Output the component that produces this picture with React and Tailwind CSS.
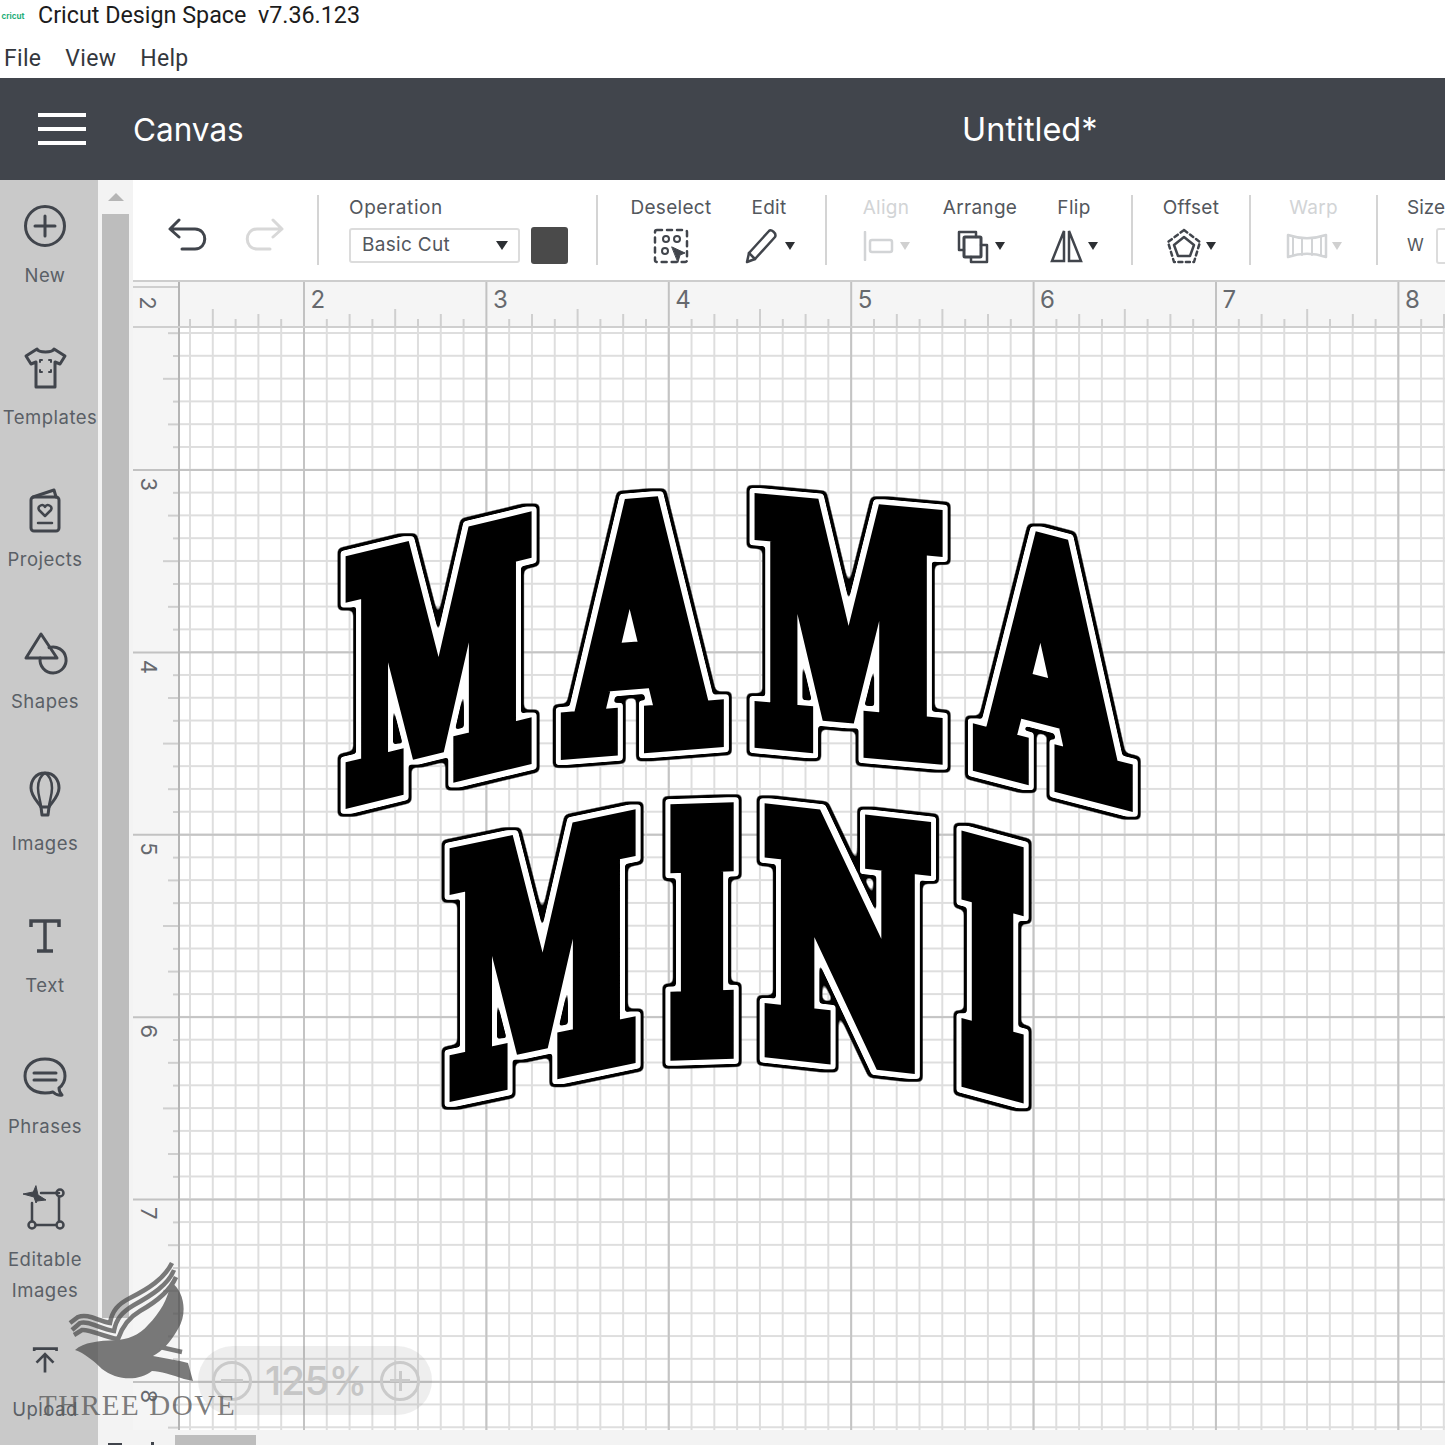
import { Fragment } from "react";

const ink = "#41454c";

const Ico = ({ children, w = 48, h = 48, className = "" }) => (
  <svg width={w} height={h} viewBox={`0 0 ${w} ${h}`} fill="none" stroke={ink} strokeWidth="2.5" strokeLinecap="round" strokeLinejoin="round" className={className}>
    {children}
  </svg>
);

const navItems = [
  {
    label: ["New"],
    h: "h-[142px]",
    icon: (
      <Fragment>
        <circle cx="24" cy="24" r="19.5" strokeWidth="3" />
        <path d="M24 14v20M14 24h20" strokeWidth="3" />
      </Fragment>
    ),
  },
  {
    label: ["Templates"],
    h: "h-[142px]",
    text: "translate-x-[5px]",
    icon: (
      <Fragment>
        <path d="M16 5L5 12l5 8 5-2v25h19V18l5 2 5-8-11-7c-2 4-15 4-17 0z" strokeWidth="3" />
        <path d="M19 18v-2h2M28 16h2v2M19 26v2h2M28 28h2v-2" strokeWidth="2" />
      </Fragment>
    ),
  },
  {
    label: ["Projects"],
    h: "h-[142px]",
    icon: (
      <Fragment>
        <rect x="10" y="11" width="28" height="34" rx="3" strokeWidth="3" />
        <path d="M12 11l21-7 2 7" strokeWidth="3" />
        <path d="M24 30l-6-6c-2-4 4-7 6-3 2-4 8-1 6 3z" strokeWidth="2.5" />
        <path d="M17 37h14" strokeWidth="2.5" />
      </Fragment>
    ),
  },
  {
    label: ["Shapes"],
    h: "h-[142px]",
    icon: (
      <Fragment>
        <path d="M20 6L5 30h31z" strokeWidth="3" />
        <path d="M28 19.6A13 13 0 1 1 19.2 30" strokeWidth="3" />
      </Fragment>
    ),
  },
  {
    label: ["Images"],
    h: "h-[142px]",
    icon: (
      <Fragment>
        <path d="M24 3C14 3 10 11 10 18c0 8 7 14 10 19h8c3-5 10-11 10-19 0-7-4-15-14-15z" strokeWidth="3" />
        <path d="M24 3c-5 3-7 9-7 15 0 8 3 14 3 19M24 3c5 3 7 9 7 15 0 8-3 14-3 19" strokeWidth="2.5" />
        <path d="M20 37l1 8h6l1-8" strokeWidth="3" />
      </Fragment>
    ),
  },
  {
    label: ["Text"],
    h: "h-[141px]",
    icon: (
      <Fragment>
        <path d="M10 15V9h28v6M24 9v30M16 39h16" strokeWidth="3.5" strokeLinecap="butt" strokeLinejoin="miter" />
      </Fragment>
    ),
  },
  {
    label: ["Phrases"],
    h: "h-[130px]",
    icon: (
      <Fragment>
        <path d="M24 6C12 6 4 13 4 23s8 17 20 17c3 0 5 0 8-1 2 2 6 4 9 3-2-2-3-4-3-7 4-3 6-7 6-12C44 13 36 6 24 6z" strokeWidth="3" />
        <path d="M13 20h22M13 27h22" strokeWidth="3" />
      </Fragment>
    ),
  },
  {
    label: ["Editable", "Images"],
    h: "h-[158px]",
    text: "translate-y-[3px]",
    icon: (
      <Fragment>
        <path d="M15 3l2 9 8 5-9 1-1 2-2-6-11-3 10-2z" fill={ink} strokeWidth="1" />
        <path d="M20 10h18M38 14v24M11 20v18M15 42h19" strokeWidth="2.5" />
        <circle cx="39" cy="10" r="3.5" />
        <circle cx="39" cy="42" r="3.5" />
        <circle cx="11" cy="42" r="3.5" />
      </Fragment>
    ),
  },
  {
    label: ["Upload"],
    h: "h-[100px]",
    text: "translate-y-[6px]",
    icon: (
      <Fragment>
        <path d="M10 13v-3h29v3" strokeWidth="3.5" strokeLinecap="butt" strokeLinejoin="miter" />
        <path d="M24 41V17M13 28l11-11 11 11" strokeWidth="3.5" strokeLinecap="butt" strokeLinejoin="miter" />
      </Fragment>
    ),
  },
];

const Caret = ({ faded }) => (
  <span className={`ml-1 h-0 w-0 border-x-[5px] border-t-[8px] border-x-transparent ${faded ? "border-t-[#d0d0d0]" : "border-t-[#2c2f33]"}`} />
);

const Tool = ({ label, width, faded, caret = true, children }) => (
  <div className={`flex flex-col items-center ${width}`}>
    <span className={`h-[26px] text-[19px] leading-[26px] tracking-[0.3px] ${faded ? "text-[#d2d4d6]" : "text-[#53575d]"}`}>{label}</span>
    <div className="mt-[6px] flex h-[38px] items-center">
      {children}
      {caret && <Caret faded={faded} />}
    </div>
  </div>
);

const Divider = () => <div className="h-[70px] w-[2px] shrink-0 bg-[#d4d4d4]" />;

const Toolbar = () => (
  <div className="flex h-[100px] shrink-0 items-center bg-white">
    <div className="flex w-[184px] shrink-0 items-center gap-[36px] pl-[35px] pt-[8px]">
      <Ico w={40} h={40}>
        <path d="M11 6L2 15l9 8M3 15h24c13 0 13 20 0 20H14" strokeWidth="3" />
      </Ico>
      <Ico w={40} h={40}>
        <g stroke="#d8d8d8">
          <path d="M29 6l9 9-9 8M37 15H13C0 15 0 35 13 35h13" strokeWidth="3" />
        </g>
      </Ico>
    </div>
    <Divider />
    <div className="flex w-[277px] shrink-0 flex-col pb-[2px] pl-[30px]">
      <span className="h-[26px] text-[19px] leading-[26px] tracking-[0.6px] text-[#53575d]">Operation</span>
      <div className="mt-[6px] flex items-center gap-[11px]">
        <div className="flex h-[35px] w-[171px] items-center justify-between rounded-[3px] border-2 border-[#dcdcdc] pl-[11px] pr-[10px] text-[19px] tracking-[0.3px] text-[#53575d]">
          Basic Cut
          <span className="h-0 w-0 border-x-[6px] border-t-[9px] border-x-transparent border-t-[#2c2f33]" />
        </div>
        <div className="h-[37px] w-[37px] rounded-[3px] bg-[#4a4a4a]" />
      </div>
    </div>
    <Divider />
    <div className="flex w-[227px] shrink-0 gap-[2px] pl-[25px]">
      <Tool label="Deselect" width="w-[96px]" caret={false}>
        <Ico w={38} h={38}>
          <rect x="3" y="3" width="32" height="32" rx="2" strokeWidth="2.5" strokeDasharray="5 5" />
          <circle cx="14" cy="12" r="3" strokeWidth="2" />
          <circle cx="25" cy="12" r="3" strokeWidth="2" />
          <circle cx="13" cy="24" r="3" strokeWidth="2" />
          <path d="M20 20l13 6-5 2-2 7z" fill={ink} strokeWidth="1" />
        </Ico>
      </Tool>
      <Tool label="Edit" width="w-[96px]">
        <Ico w={38} h={38}>
          <path d="M6 26L26 4c2-2 8 2 6 6L12 32l-8 3z" strokeWidth="2.5" />
          <path d="M6 26l6 6" strokeWidth="2.5" />
        </Ico>
      </Tool>
    </div>
    <Divider />
    <div className="flex w-[304px] shrink-0 pl-[12px]">
      <Tool label="Align" width="w-[94px]" faded>
        <Ico w={34} h={30}>
          <g stroke="#d2d4d6">
            <path d="M3 1v28" />
            <rect x="8" y="9" width="22" height="12" rx="2" />
          </g>
        </Ico>
      </Tool>
      <Tool label="Arrange" width="w-[94px]">
        <Ico w={36} h={36}>
          <path d="M9 22H4V4h17v5" strokeWidth="2.5" />
          <rect x="9" y="9" width="17" height="20" rx="1" strokeWidth="3" />
          <path d="M26 17h6v17H16v-5" strokeWidth="2.5" />
        </Ico>
      </Tool>
      <Tool label="Flip" width="w-[94px]">
        <Ico w={34} h={36}>
          <path d="M14 3L2 33h12zM19 3l12 30H19z" strokeWidth="2.5" strokeLinejoin="miter" />
        </Ico>
      </Tool>
    </div>
    <Divider />
    <div className="flex w-[116px] shrink-0 justify-center">
      <Tool label="Offset" width="w-[100px]">
        <Ico w={36} h={36}>
          <path d="M18 2l16 12-6 20H8L2 14z" strokeWidth="2.5" strokeDasharray="4 3.5" />
          <path d="M18 9l10 8-4 11H12L8 17z" strokeWidth="2.5" />
        </Ico>
      </Tool>
    </div>
    <Divider />
    <div className="flex w-[125px] shrink-0 justify-center">
      <Tool label="Warp" width="w-[100px]" faded>
        <Ico w={42} h={26}>
          <g stroke="#d2d4d6">
            <path d="M2 2c12 4 26 4 38 0v22c-12-4-26-4-38 0z" />
            <path d="M7 4v18M16 5v17M26 5v17M35 4v18" strokeWidth="2" />
          </g>
        </Ico>
      </Tool>
    </div>
    <Divider />
    <div className="flex flex-col pl-[29px]">
      <span className="h-[26px] text-[19px] leading-[26px] text-[#53575d]">Size</span>
      <div className="mt-[6px] flex h-[38px] items-center gap-[12px] text-[17px] text-[#53575d]">
        W
        <div className="h-[36px] w-[40px] rounded-[3px] border-2 border-[#dcdcdc]" />
      </div>
    </div>
  </div>
);

// ruler ticks run on a 1/8 inch step
const STEP = 22.8;

const tickSize = (i) => (i % 8 === 0 ? 44 : i % 4 === 0 ? 17 : i % 2 === 0 ? 12 : 7);

const HRuler = () => {
  const ticks = Array.from({ length: 58 }, (_, i) => i);
  return (
    <svg width="1265" height="44" className="block shrink-0">
      {ticks.map((i) => {
        const x = 124 - 5 * STEP + i * STEP;
        const len = tickSize(i - 5 + 800);
        return <line key={i} x1={x} x2={x} y1={44 - len} y2="44" stroke={len === 44 ? "#c2c2c2" : "#cfcfcf"} strokeWidth="2" />;
      })}
      {[2, 3, 4, 5, 6, 7, 8].map((n, i) => (
        <text key={n} x={130.5 + i * 182.4} y="26" fontSize="24" fill="#66696e" fontFamily="Inter, sans-serif">
          {n}
        </text>
      ))}
    </svg>
  );
};

const VRuler = () => {
  const ticks = Array.from({ length: 50 }, (_, i) => i);
  return (
    <svg width="47" height="1102" className="block shrink-0">
      {ticks.map((i) => {
        const y = 5.2 + i * STEP;
        const len = tickSize(i + 2);
        return len === 44 ? (
          <line key={i} x1="0" x2="47" y1={y} y2={y} stroke="#c2c2c2" strokeWidth="2" />
        ) : (
          <line key={i} x1={47 - len} x2="47" y1={y} y2={y} stroke="#cfcfcf" strokeWidth="2" />
        );
      })}
      {[3, 4, 5, 6, 7, 8].map((n, i) => (
        <text key={n} transform={`translate(8 ${149.4 + i * 182.4}) rotate(90)`} fontSize="22" fill="#66696e" fontFamily="Inter, sans-serif">
          {n}
        </text>
      ))}
    </svg>
  );
};

// corners of each letter as they sit on the mat:
// glyph, ink width in em, extra weight, left x, right x, top-left y, top-right y, bottom-left y, bottom-right y
const letters = [
  ["M", 1.02, 23, 346, 532, 555, 510, 808, 765],
  ["A", 0.79, 24, 561, 723, 504, 491, 760, 747],
  ["M", 1.02, 23, 755, 943, 493, 510, 748, 765],
  ["A", 0.79, 24, 973, 1132, 514, 555, 770, 813],
  ["M", 1.02, 23, 450, 636, 848, 809, 1102, 1063],
  ["I", 0.37, 40, 668, 736, 805, 803, 1059, 1058],
  ["N", 0.8, 30, 767, 928, 804, 822, 1058, 1075],
  ["I", 0.37, 40, 959, 1026, 831, 849, 1085, 1103],
];

// the browser stretches a text stroke along with the glyph, so the weight added sideways and upward differ
const letterMatrix = ([, adv, bold, x0, x1, tl, tr, bl, br]) => {
  const W = x1 - x0;
  const H = bl - tl;
  const a0 = W / (adv * 100);
  const d0 = H / 72.9;
  const s = Math.sqrt((a0 * a0 + d0 * d0) / 2);
  const a = (W - (bold * a0) / s) / (adv * 100);
  const d = (H - (bold * d0) / s) / 72.9;
  const b = ((tr - tl) / W) * a;
  const f = (bl + br) / 2 - (bold * d0) / s / 2;
  return `matrix(${a} ${b} 0 ${d} ${(x0 + x1) / 2} ${f})`;
};

const Lettering = () => (
  <svg width="1445" height="1445" className="absolute left-0 top-0">
    <defs>
      <filter id="cutline" filterUnits="userSpaceOnUse" x="0" y="0" width="1445" height="1445" colorInterpolationFilters="sRGB">
        <feMorphology in="SourceAlpha" operator="dilate" radius="8" />
        <feGaussianBlur stdDeviation="2.5" />
        <feComponentTransfer result="outer">
          <feFuncA type="linear" slope="5" intercept="-2" />
        </feComponentTransfer>
        <feMorphology in="SourceAlpha" operator="dilate" radius="5" />
        <feGaussianBlur stdDeviation="1.5" />
        <feComponentTransfer result="innerAlpha">
          <feFuncA type="linear" slope="5" intercept="-2" />
        </feComponentTransfer>
        <feFlood floodColor="#fff" />
        <feComposite in2="innerAlpha" operator="in" result="inner" />
        <feMerge>
          <feMergeNode in="outer" />
          <feMergeNode in="inner" />
          <feMergeNode in="SourceGraphic" />
        </feMerge>
      </filter>
    </defs>
    {letters.map((l, i) => (
      <g key={i} filter="url(#cutline)">
        <text
          transform={letterMatrix(l)}
          textAnchor="middle"
          fontFamily="'DejaVu Serif', serif"
          fontWeight="700"
          fontSize="100"
          fill="#000"
          stroke="#000"
          strokeWidth={l[2]}
          strokeLinejoin="miter"
          vectorEffect="non-scaling-stroke"
        >
          {l[0]}
        </text>
      </g>
    ))}
  </svg>
);

const ZoomPill = () => (
  <div className="absolute left-[198px] top-[1346px] flex h-[69px] w-[234px] items-center justify-between rounded-full bg-[#8f8f8f]/15 pl-[14px] pr-[12px] text-[#c6c6c6]">
    <span className="flex h-[40px] w-[40px] items-center justify-center rounded-full border-[3px] border-[#cacaca]">
      <span className="h-[3px] w-[22px] bg-[#cacaca]" />
    </span>
    <span className="text-[39px] font-medium leading-none tracking-[-0.3px]">125%</span>
    <span className="relative flex h-[40px] w-[40px] items-center justify-center rounded-full border-[3px] border-[#cacaca]">
      <span className="h-[3px] w-[20px] bg-[#cacaca]" />
      <span className="absolute h-[20px] w-[3px] bg-[#cacaca]" />
    </span>
  </div>
);

const Watermark = () => (
  <Fragment>
    <svg width="140" height="135" viewBox="0 0 140 135" className="absolute left-[60px] top-[1255px] opacity-75">
      <path fill="#4f4f4f" d="M111 27C124 36 128 58 118 74C110 88 102 96 93 101L120 106L128 108L133 126L124 124C112 120 100 116 92 116C78 127 56 125 42 114C34 106 24 98 15 95C24 87 38 86 56 85C66 85 80 80 88 70C100 58 108 44 111 27Z" />
      <g fill="none" stroke="#4f4f4f" strokeWidth="4.5">
        <path d="M112 8C104 24 88 34 70 43C58 49 52 56 50 68C38 66 28 58 18 62L10 68" />
        <path d="M114 15C108 30 92 40 74 50C62 57 56 64 54 76C40 74 28 65 20 68L12 75" />
        <path d="M116 22C110 36 96 47 80 56C68 63 62 72 58 84C44 82 30 74 22 75L14 80" />
        <path d="M100 92L122 97" />
      </g>
    </svg>
    <span className="absolute left-[39px] top-[1390px] font-['Liberation_Serif',serif] text-[29px] leading-[30px] tracking-[1.6px] text-[#5b5b5b]/80">
      THREE DOVE
    </span>
  </Fragment>
);

export default function App() {
  return (
    <div className="relative h-[1445px] w-[1445px] overflow-hidden bg-white font-['Inter',sans-serif]">
      <div className="flex h-[39px] items-center pb-[8px]">
        <div className="flex h-[26px] w-[26px] items-center justify-center overflow-hidden rounded-[3px] text-[8px] font-bold text-[#1fae7a]">cricut</div>
        <span className="ml-[12px] whitespace-pre font-['Roboto',sans-serif] text-[23.3px] leading-none text-[#1c1c1c]">Cricut Design Space  v7.36.123</span>
      </div>
      <div className="flex h-[39px] items-center gap-[24px] pl-[4px] pt-[2px] font-['Roboto',sans-serif] text-[23px] tracking-[0.3px] text-[#33373d]">
        <span>File</span>
        <span>View</span>
        <span>Help</span>
      </div>

      <header className="relative flex h-[102px] items-center bg-[#41454c] pl-[38px] text-white">
        <div className="flex w-[48px] flex-col gap-[10px]">
          <span className="h-[4px] bg-white" />
          <span className="h-[4px] bg-white" />
          <span className="h-[4px] bg-white" />
        </div>
        <span className="ml-[47px] mt-[2px] text-[31.5px] leading-none">Canvas</span>
        <span className="absolute left-[962px] mt-[2px] text-[32.5px] leading-none">Untitled*</span>
      </header>

      <div className="flex h-[1265px]">
        <aside className="w-[98px] shrink-0 overflow-hidden bg-[#c9c9c9] pr-[8px]">
          {navItems.map((item) => (
            <div key={item.label[0]} className={`flex flex-col items-center pt-[22px] ${item.h}`}>
              <Ico>{item.icon}</Ico>
              <div className={`mt-[10px] whitespace-nowrap text-center text-[18.5px] leading-[31px] tracking-[0.5px] text-[#5a5f66] ${item.text || ""}`}>
                {item.label.map((line) => (
                  <div key={line}>{line}</div>
                ))}
              </div>
            </div>
          ))}
        </aside>
        <div className="flex w-[35px] shrink-0 flex-col items-center bg-[#f3f3f3] px-[4px]">
          <span className="mt-[13px] h-0 w-0 border-x-[8px] border-b-[8px] border-x-transparent border-b-[#b5b5b5]" />
          <div className="mt-[13px] h-[1104px] w-full bg-[#bdbdbd]" />
        </div>

        <main className="flex min-w-0 flex-1 flex-col">
          <Toolbar />
          <div className="flex h-[46px] shrink-0 border-t-[2px] border-[#cdcdcd] bg-[#f5f5f5]">
            <div className="w-[47px] shrink-0 border-r-2 border-[#b5b5b5]">
              <div className="h-[6px] border-b-2 border-[#cfcfcf]" />
              <div className="w-[30px] rotate-90 text-center text-[22px] leading-[30px] text-[#66696e]">2</div>
            </div>
            <HRuler />
          </div>
          <div className="flex min-h-0 flex-1 border-t-2 border-[#cfcfcf]">
            <div className="h-[1102px] w-[47px] shrink-0 overflow-hidden border-r-2 border-[#b5b5b5] bg-[#f5f5f5]">
              <VRuler />
            </div>
            <div className="h-[1102px] flex-1 bg-white bg-[linear-gradient(to_right,#c4c4c4_2px,transparent_2px),linear-gradient(to_bottom,#c4c4c4_2px,transparent_2px),linear-gradient(to_right,#dedede_2px,transparent_2px),linear-gradient(to_bottom,#dedede_2px,transparent_2px)] [background-position:123px_0,0_141px,9px_0,0_4px] [background-size:182.4px_100%,100%_182.4px,22.8px_100%,100%_22.8px]" />
          </div>
          <div className="h-[15px] shrink-0 bg-[#f3f3f3] pl-[42px] pt-[5px]">
            <div className="h-full w-[81px] bg-[#bdbdbd]" />
          </div>
        </main>
      </div>

      <span className="absolute bottom-0 left-[108px] h-[2px] w-[14px] bg-[#41454c]" />
      <span className="absolute bottom-0 left-[151px] h-[3px] w-[3px] bg-[#41454c]" />

      <Lettering />
      <ZoomPill />
      <Watermark />
    </div>
  );
}
